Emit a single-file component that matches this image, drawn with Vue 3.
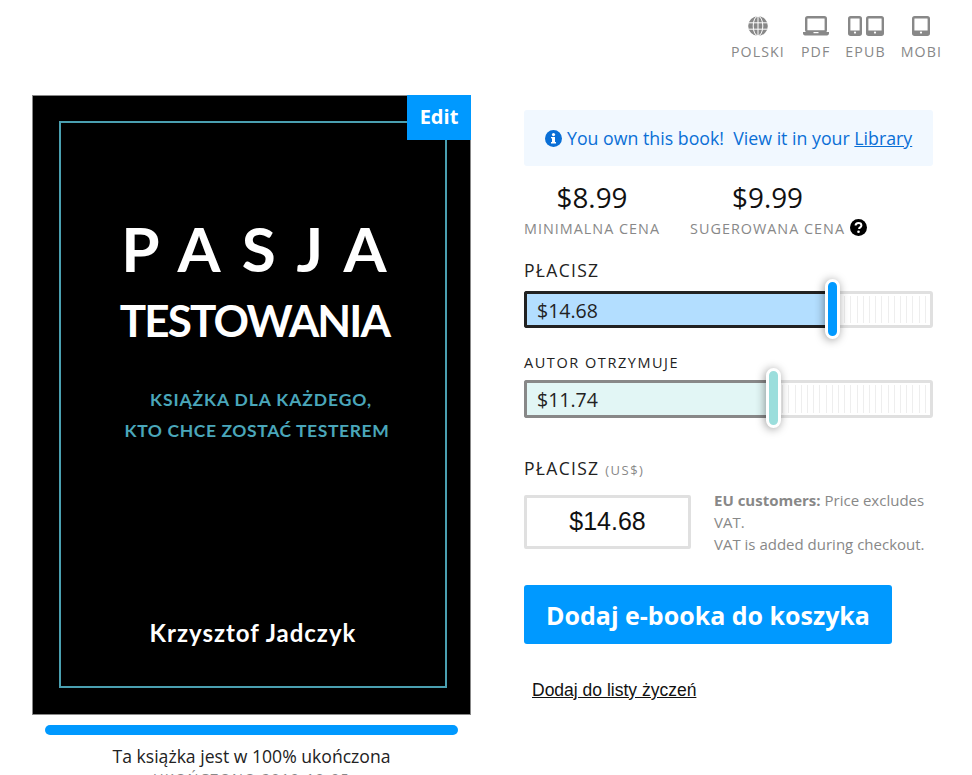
<template>
  <div class="page">
    <div class="formats">
      <div class="format lang">
        <svg width="20" height="20" viewBox="0 0 20 20" class="ic">
          <circle cx="10" cy="10" r="9.800" fill="#888" />
          <path d="M0.500 6.800h19M0.500 13.200h19M10 0.500v19" stroke="#fff" stroke-width="1" fill="none" />
          <ellipse cx="10" cy="10" rx="4.800" ry="9.800" stroke="#fff" stroke-width="1" fill="none" />
        </svg>
        <span>POLSKI</span>
      </div>
      <div class="format">
        <svg width="26" height="20" viewBox="0 0 26 20" class="ic">
          <rect x="3.200" y="1.200" width="19.600" height="14.300" rx="1.500" fill="none" stroke="#888" stroke-width="2.400" />
          <path d="M0 16h26v1.600a1.800 1.800 0 0 1-1.800 1.800H1.800A1.800 1.800 0 0 1 0 17.600z" fill="#888" />
          <rect x="10.500" y="16" width="5" height="1.200" fill="#fff" />
        </svg>
        <span>PDF</span>
      </div>
      <div class="format">
        <svg width="36" height="20" viewBox="0 0 36 20" class="ic">
          <rect x="1.200" y="1.200" width="11.600" height="17.600" rx="1.500" fill="none" stroke="#888" stroke-width="2.400" />
          <rect x="1" y="14.500" width="12" height="4.500" fill="#888" />
          <circle cx="7" cy="16.600" r="1.100" fill="#fff" />
          <rect x="19.200" y="1.200" width="15.600" height="17.600" rx="1.500" fill="none" stroke="#888" stroke-width="2.400" />
          <rect x="19" y="14.500" width="16" height="4.500" fill="#888" />
          <circle cx="27" cy="16.600" r="1.100" fill="#fff" />
        </svg>
        <span>EPUB</span>
      </div>
      <div class="format">
        <svg width="18" height="20" viewBox="0 0 18 20" class="ic">
          <rect x="1.200" y="1.200" width="15.600" height="17.600" rx="1.500" fill="none" stroke="#888" stroke-width="2.400" />
          <rect x="1" y="14.500" width="16" height="4.500" fill="#888" />
          <circle cx="9" cy="16.600" r="1.100" fill="#fff" />
        </svg>
        <span>MOBI</span>
      </div>
    </div>

    <div class="main">
      <div class="left">
        <div class="cover">
          <div class="cover-frame">
            <div class="c-title">PASJA</div>
            <div class="c-sub">TESTOWANIA</div>
            <div class="c-desc">
              <div class="line-one">KSIĄŻKA DLA KAŻDEGO,</div>
              <div class="line-two">KTO CHCE ZOSTAĆ TESTEREM</div>
            </div>
            <div class="c-author">Krzysztof Jadczyk</div>
          </div>
          <a class="edit">Edit</a>
        </div>
        <div class="progress"></div>
        <div class="complete">Ta książka jest w 100% ukończona</div>
        <div class="finished">UKOŃCZONO 2019-10-05</div>
      </div>

      <div class="right">
        <div class="notice">
          <svg width="17" height="17" viewBox="0 0 17 17" class="info">
            <circle cx="8.500" cy="8.500" r="8.500" fill="#0a6fd6" />
            <rect x="7" y="7" width="3" height="6" fill="#fff" />
            <rect x="6" y="12" width="5" height="1.500" fill="#fff" />
            <rect x="6" y="7" width="2" height="1.300" fill="#fff" />
            <circle cx="8.500" cy="4.600" r="1.600" fill="#fff" />
          </svg>
          <span>You own this book!&nbsp; View it in your <a>Library</a></span>
        </div>

        <div class="prices">
          <div class="price">
            <div class="amount">$8.99</div>
            <div class="cap">MINIMALNA CENA</div>
          </div>
          <div class="price">
            <div class="amount">$9.99</div>
            <div class="cap">SUGEROWANA CENA<svg width="17" height="17" viewBox="0 0 17 17" class="help">
                <circle cx="8.500" cy="8.500" r="8.500" fill="#000" />
                <path d="M5.600 6.500c0-1.700 1.300-2.500 2.900-2.500s2.900.9 2.900 2.400c0 2-2.300 1.900-2.300 3.500" fill="none" stroke="#fff" stroke-width="2" />
                <circle cx="8.500" cy="12.800" r="1.300" fill="#fff" />
              </svg></div>
          </div>
        </div>

        <div class="label">PŁACISZ</div>
        <div class="slider you">
          <div class="fill" :style="{ width: youWidth + 'px' }">$14.68</div>
          <div class="handle" :style="{ left: youWidth + 'px' }"></div>
        </div>

        <div class="label small">AUTOR OTRZYMUJE</div>
        <div class="slider author">
          <div class="fill" :style="{ width: authorWidth + 'px' }">$11.74</div>
          <div class="handle" :style="{ left: authorWidth + 'px' }"></div>
        </div>

        <div class="label pay">PŁACISZ <small>(US$)</small></div>
        <div class="pay-row">
          <div class="pay-box">$14.68</div>
          <div class="vat">
            <b>EU customers:</b> Price excludes VAT.<br />
            VAT is added during checkout.
          </div>
        </div>

        <button class="buy">Dodaj e-booka do koszyka</button>
        <a class="wish">Dodaj do listy życzeń</a>
      </div>
    </div>
  </div>
</template>

<script setup>
const youWidth = 301
const authorWidth = 242
</script>

<style>
html, body {
  background: #fff;
  height: 775px;
  overflow: hidden;
}
</style>

<style scoped>
.page {
  width: 972px;
  height: 775px;
  overflow: hidden;
  font-family: "Open Sans", "Noto Sans", sans-serif;
  color: #222;
}

.formats {
  display: flex;
  justify-content: flex-end;
  gap: 15px;
  height: 95px;
  padding: 16px 30px 0 0;
  box-sizing: border-box;
}
.format {
  display: flex;
  flex-direction: column;
  align-items: center;
  font-size: 14.200px;
  letter-spacing: 1.100px;
  color: #888;
  line-height: 19px;
}
.format.lang {
  margin-right: 1px;
}
.ic {
  margin-bottom: 6px;
}

.main {
  display: flex;
  align-items: flex-start;
  padding-left: 32px;
}

.left {
  width: 439px;
  text-align: center;
}
.cover {
  position: relative;
  width: 439px;
  height: 620px;
  box-sizing: border-box;
  border: 1px solid #888;
  background: #000;
  padding: 25px 23px 26px 26px;
}
.cover-frame {
  height: 100%;
  box-sizing: border-box;
  border: 2px solid #4a9fb0;
  font-family: Lato, sans-serif;
  font-weight: 700;
  color: #fff;
  text-align: center;
  padding-top: 95px;
}
.c-title {
  font-size: 62px;
  line-height: 60px;
  letter-spacing: 21px;
  padding-left: 23px;
}
.c-sub {
  font-size: 44px;
  line-height: 50px;
  margin-top: 17px;
  letter-spacing: -1.900px;
  padding-left: 3px;
}
.c-desc {
  margin-top: 39px;
  color: #4aa6ba;
  font-size: 17.500px;
  line-height: 31px;
}
.line-one {
  letter-spacing: 0.900px;
  padding-left: 16px;
}
.line-two {
  letter-spacing: 0.600px;
  padding-left: 8px;
}
.c-author {
  margin-top: 172px;
  font-size: 24px;
  letter-spacing: 1px;
  line-height: 30px;
}
.edit {
  position: absolute;
  top: -1px;
  right: -1px;
  width: 64px;
  height: 45px;
  background: #0099ff;
  color: #fff;
  font-size: 20px;
  font-weight: 700;
  line-height: 44px;
  text-align: center;
}
.progress {
  height: 10px;
  margin: 10px 13px 0;
  border-radius: 5px;
  background: #0099ff;
}
.complete {
  margin-top: 9px;
  font-size: 17.600px;
  line-height: 24px;
}
.finished {
  font-size: 14.500px;
  letter-spacing: 1.250px;
  color: #888;
  line-height: 22px;
}

.right {
  width: 409px;
  margin-left: 53px;
  padding-top: 15px;
}
.notice {
  display: flex;
  align-items: center;
  gap: 5px;
  height: 56px;
  padding-left: 21px;
  box-sizing: border-box;
  border-radius: 3px;
  background: #f1f8ff;
  color: #0a6fd6;
  font-size: 17.750px;
}
.notice a {
  text-decoration: underline;
}
.prices {
  display: flex;
  gap: 30px;
  margin-top: 13px;
}
.price {
  text-align: center;
}
.amount {
  font-size: 27.800px;
  line-height: 36px;
  color: #111;
}
.cap {
  margin-top: 4px;
  font-size: 14.400px;
  letter-spacing: 1px;
  color: #888;
  line-height: 20px;
  white-space: nowrap;
}
/* the help icon hangs off the caption, the price is centred on the text alone */
.help {
  vertical-align: -2px;
  margin-left: 5px;
  margin-right: -22px;
}
.label {
  margin-top: 20px;
  font-size: 17.500px;
  letter-spacing: 1.300px;
  line-height: 22px;
}
.label.small {
  margin-top: 24px;
  font-size: 14.500px;
  letter-spacing: 1.550px;
}
.label.pay {
  margin-top: 39px;
}
.label small {
  font-size: 13px;
  line-height: 1;
  color: #888;
  letter-spacing: 1.500px;
}
.slider {
  position: relative;
  height: 38px;
  margin-top: 6px;
  box-sizing: border-box;
  border: 3px solid #e0e0e0;
  border-radius: 3px;
}
.slider.you {
  height: 37px;
  margin-top: 10px;
}
/* tick marks in the empty part of the track */
.slider::before {
  content: "";
  position: absolute;
  inset: 2px 2px;
  background: repeating-linear-gradient(90deg, #fff 0, #fff 5.200px, #eee 5.200px, #eee 6.200px);
}
.slider .fill {
  position: absolute;
  top: -3px;
  bottom: -3px;
  left: -3px;
  box-sizing: border-box;
  border: 3px solid #222;
  border-right: 0;
  border-radius: 3px 0 0 3px;
  padding-left: 10px;
  background: #b3deff;
  font-size: 19.500px;
  line-height: 33px;
}
.slider.author .fill {
  border-color: #888;
  background: #e2f6f5;
}
.handle {
  position: absolute;
  top: -15px;
  width: 15px;
  height: 60px;
  margin-left: -3px;
  box-sizing: border-box;
  border: 3px solid #fff;
  border-radius: 8px;
  background: #0099ff;
  box-shadow: -1px 1px 10px rgba(0, 0, 0, 0.4);
}
.slider.author .handle {
  background: #9bdedc;
}
.pay-row {
  display: flex;
  gap: 23px;
  margin-top: 16px;
}
.pay-box {
  flex: none;
  width: 167px;
  height: 54px;
  box-sizing: border-box;
  border: 3px solid #e0e0e0;
  border-radius: 2px;
  font-family: "Liberation Sans", sans-serif;
  font-size: 25px;
  line-height: 47px;
  text-align: center;
  color: #111;
}
.vat {
  font-size: 15px;
  line-height: 22px;
  color: #888;
  margin-top: -6px;
}
.buy {
  display: block;
  width: 368px;
  height: 59px;
  margin-top: 30px;
  border: 0;
  border-radius: 3px;
  background: #0099ff;
  color: #fff;
  font-family: inherit;
  font-size: 25px;
  font-weight: 700;
}
.wish {
  display: inline-block;
  margin: 35px 0 0 8px;
  font-family: "Liberation Sans", sans-serif;
  font-size: 17.500px;
  line-height: 22px;
  color: #111;
  text-decoration: underline;
}
</style>
